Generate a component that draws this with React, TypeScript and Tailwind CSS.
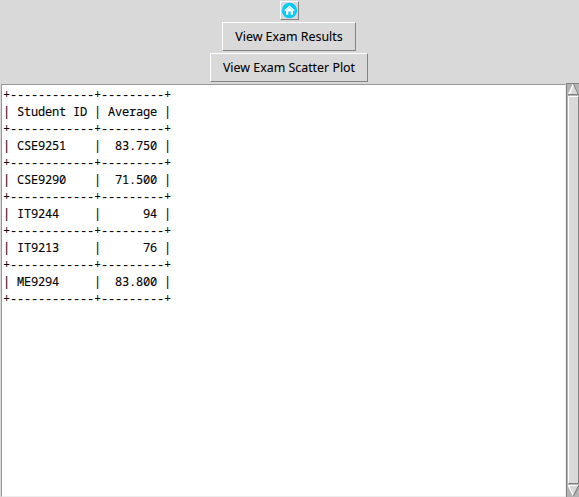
const border = '+------------+---------+';

const rows = [
  ['Student ID', 'Average'],
  ['CSE9251', '83.750'],
  ['CSE9290', '71.500'],
  ['IT9244', '94'],
  ['IT9213', '76'],
  ['ME9294', '83.800'],
];

const raised =
  'border border-t-white border-l-white border-r-[#828282] border-b-[#828282] bg-[#d9d9d9]';

function TextButton({ label, size }: { label: string; size: string }) {
  return (
    <button
      className={`${raised} ${size} flex h-[29px] items-center justify-center whitespace-pre text-[12.4px] leading-[17px] text-black [-webkit-text-stroke:0.08px_black]`}
    >
      {label}
    </button>
  );
}

function HomeButton() {
  return (
    <button className={`${raised} flex h-[19px] w-[19px] items-center justify-center`} aria-label="Home">
      <svg width="17" height="17" viewBox="0 0 17 17">
        <circle cx="8.5" cy="8.5" r="7.7" fill="#08cafc" />
        <path d="M3.6 8.7 8.5 4.2 13.4 8.7" fill="none" stroke="white" strokeWidth="1.2" />
        <path d="M5 8.6 8.5 5.5 12 8.6V12.7H9.7V9.5H7.3V12.7H5Z" fill="white" />
      </svg>
    </button>
  );
}

function Scrollbar() {
  return (
    <div className="-mt-px flex w-[13px] flex-col border-t border-l border-[#828282] bg-[#b3b3b3] pl-px">
      <svg width="11" height="11" viewBox="0 0 11 11" className="shrink-0">
        <path d="M5.5 0 11 11H0Z" fill="#d9d9d9" />
        <path d="M5.5 0 .5 11" stroke="white" strokeWidth="1.6" />
        <path d="M5.5 0 10.5 11M0 10.5H11" stroke="#828282" strokeWidth="1" />
      </svg>
      <div className={`${raised} mt-px w-[11px] grow`} />
      <svg width="11" height="11" viewBox="0 0 11 11" className="mt-px mb-px shrink-0">
        <path d="M0 0H11L5.5 11Z" fill="#d9d9d9" />
        <path d="M0 .5H11M0 0 5.5 11" stroke="white" strokeWidth="1.2" />
        <path d="M11 0 5.5 11" stroke="#828282" strokeWidth="1.2" />
      </svg>
    </div>
  );
}

export default function App() {
  return (
    <div className="flex h-[497px] w-[579px] flex-col overflow-hidden bg-[#d9d9d9] font-['Noto_Sans',sans-serif]">
      <div className="flex h-[84px] shrink-0 flex-col items-center pt-px">
        <HomeButton />
        <div className="mt-[2px] pr-px">
          <TextButton label="View Exam Results" size="w-[134px]" />
        </div>
        <div className="mt-[2px] pr-px">
          <TextButton label="View Exam Scatter Plot" size="w-[158px]" />
        </div>
      </div>
      <div className="flex min-h-0 grow">
        <div className="ml-px grow border border-t-[#999999] border-l-[#999999] border-r-[#ededed] border-b-[#ededed] bg-white pt-px pl-px font-['Noto_Sans_Mono','DejaVu_Sans_Mono',monospace] text-[12px] leading-[17px] tracking-[-0.2px] text-black">
          <pre className="font-[inherit]">{border}</pre>
          {rows.map(([id, average]) => (
            <div key={id}>
              <pre className="font-[inherit] [-webkit-text-stroke:0.12px_black]">{`| ${id.padEnd(10)} | ${average.padStart(7)} |`}</pre>
              <pre className="font-[inherit]">{border}</pre>
            </div>
          ))}
        </div>
        <Scrollbar />
      </div>
    </div>
  );
}
